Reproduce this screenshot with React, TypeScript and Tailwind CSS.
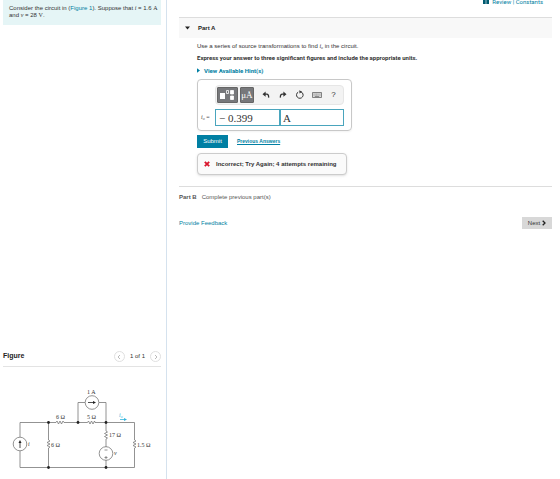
import type { ReactNode } from "react"

const teal = "text-[#007fa3]"

function ToolButton({ label, children }: { label: string; children: ReactNode }) {
  return (
    <button type="button" aria-label={label} className="flex h-4 w-[17px] items-center justify-center text-[#333]">
      {children}
    </button>
  )
}

function UndoArrow({ className = "" }: { className?: string }) {
  return (
    <svg viewBox="0 0 8 8" className={`size-2 ${className}`} fill="none">
      <path d="M0.5 3.2 3.6 0.6V5.8Z" fill="#333" />
      <path d="M3 3.2H4.6C6.2 3.2 6.8 4.4 6.6 6.6" stroke="#333" strokeWidth="1.3" />
    </svg>
  )
}

function Toolbar() {
  return (
    <div className="flex h-5 items-center rounded-sm border border-[#e6e6e6] bg-[#f3f3f3] px-px">
      <button
        type="button"
        aria-label="Templates"
        className="flex h-4 w-[22px] items-center justify-center rounded-[1px] border border-[#666] bg-[#77787b]"
      >
        <svg viewBox="0 0 18 12" className="h-3 w-[18px]" fill="none">
          <path d="M2 4H7V10H2Z" fill="#fff" />
          <path d="M8.5 1.5H10.5V4.5H8.5ZM12.5 1.5H15.5V5H12.5ZM12.5 7H15.5V10.5H12.5Z" stroke="#fff" strokeWidth="0.8" />
          <path d="M12.5 1.5H15.5V5H12.5ZM12.5 7H15.5V10.5H12.5Z" fill="#fff" />
        </svg>
      </button>
      <button
        type="button"
        aria-label="Units"
        className="ml-0.5 flex h-4 w-[15px] items-center justify-center rounded-[1px] border border-[#666] bg-[#77787b] font-['Liberation_Serif',serif] text-[9px] leading-none text-white"
      >
        μÅ
      </button>
      <div className="flex flex-1 items-center justify-between pl-[3px]">
        <ToolButton label="Undo">
          <UndoArrow />
        </ToolButton>
        <ToolButton label="Redo">
          <UndoArrow className="-scale-x-100" />
        </ToolButton>
        <ToolButton label="Reset">
          <svg viewBox="0 0 10 10" className="size-[10px]" fill="none">
            <path d="M3.2 2.1A3.3 3.3 0 1 0 6 1.9" stroke="#333" strokeWidth="1" />
            <path d="M4.2 0.3 7 1.8 4.6 3.6Z" fill="#333" />
          </svg>
        </ToolButton>
        <ToolButton label="Keyboard">
          <svg viewBox="0 0 10 6" className="h-1.5 w-[10px]" fill="none">
            <path d="M0.5 0.5H9.5V5.5H0.5Z" fill="#ddd" stroke="#666" strokeWidth="0.8" />
            <path d="M1.5 2H8.5M1.5 3.2H8.5" stroke="#777" strokeWidth="0.6" strokeDasharray="0.9 0.4" />
            <path d="M2.8 4.5H7.2" stroke="#666" strokeWidth="0.7" />
          </svg>
        </ToolButton>
        <ToolButton label="Help">
          <span className="text-[8px] leading-none">?</span>
        </ToolButton>
      </div>
    </div>
  )
}

function Circuit() {
  return (
    <svg viewBox="0 0 158 100" className="w-full" fill="none" stroke="#777" strokeWidth="0.8" role="img" aria-label="Circuit diagram">
      {/* outer loop */}
      <path d="M17 58V43.5H53M61 43.5H84.5M92 43.5H131.5V61M131.5 69V88.5H17V72" />
      <path d="M45.5 43.5V61M45.5 69V88.5" />
      <path d="M75 43.5V23.5H82M96 23.5H103V52M103 60V68M103 81V88.5" />

      {/* resistors */}
      <path d="M53 43.5 54 42 55.5 45 57 42 58.5 45 60 42 61 43.5" />
      <path d="M84.5 43.5 85.5 42 87 45 88.5 42 90 45 91.5 42 92 43.5" />
      <path d="M45.5 61 47 62 44 63.5 47 65 44 66.5 47 68 45.5 69" />
      <path d="M103 52 104.5 53 101.5 54.5 104.5 56 101.5 57.5 104.5 59 103 60" />
      <path d="M131.5 61 133 62 130 63.5 133 65 130 66.5 133 68 131.5 69" />

      {/* sources */}
      <circle cx="17" cy="65" r="6.8" />
      <path d="M17 69V63" stroke="#222" />
      <path d="M15.5 64 17 61 18.5 64Z" fill="#222" stroke="none" />
      <circle cx="89" cy="23.5" r="6.8" />
      <path d="M85 23.5H91" stroke="#222" />
      <path d="M90 22 93 23.5 90 25Z" fill="#222" stroke="none" />
      <circle cx="103" cy="74.5" r="6.8" />
      <path d="M101.5 71H104.5M101.5 78.5H104.5M103 77V80" />

      {/* nodes */}
      <g fill="#222" stroke="none">
        <circle cx="45.5" cy="43.5" r="1.4" />
        <circle cx="75" cy="43.5" r="1.4" />
        <circle cx="103" cy="43.5" r="1.4" />
        <circle cx="45.5" cy="88.5" r="1.4" />
        <circle cx="103" cy="88.5" r="1.4" />
      </g>

      <path d="M117 40.5H122" stroke="#35b5dc" />
      <path d="M121 39 124 40.5 121 42Z" fill="#35b5dc" stroke="none" />

      <g fill="#333" stroke="none" className="font-['Liberation_Serif',serif] text-[6px]">
        <text x="53" y="40">6 Ω</text>
        <text x="84" y="40">5 Ω</text>
        <text x="84" y="15">1 A</text>
        <text x="48" y="68">6 Ω</text>
        <text x="106" y="58">17 Ω</text>
        <text x="134" y="68">1.5 Ω</text>
        <text x="25" y="67" className="italic">i</text>
        <text x="111" y="76" className="italic">v</text>
        <text x="116" y="38" fill="#35b5dc" className="italic">i<tspan className="text-[4px]" dy="1">o</tspan></text>
      </g>
    </svg>
  )
}

function Sidebar() {
  return (
    <aside className="flex w-[167px] shrink-0 flex-col border-r border-[#d5e2ee] pr-[5px] pl-[3px]">
      <div className="h-[25px] bg-[#e5f5f6] pt-[5px] pl-1.5 text-[6px] leading-[7px] text-[#333]">
        Consider the circuit in (
        <a href="#figure" className={teal}>Figure 1</a>
        ). Suppose that <i className="font-['Liberation_Serif',serif]">i</i> = 1.6{" "}
        <span className="font-['Liberation_Serif',serif]">A</span>
        <br />
        and <i className="font-['Liberation_Serif',serif]">v</i> = 28{" "}
        <span className="font-['Liberation_Serif',serif]">V</span>.
      </div>

      <section id="figure" className="mt-auto">
        <header className="flex h-[17px] items-center justify-between border-b border-[#e3e3e3] pb-[3px]">
          <h2 className="text-[7px] font-bold text-[#222]">Figure</h2>
          <div className="flex items-center gap-[5px] text-[6px] text-[#333]">
            <button type="button" aria-label="Previous figure" className="flex size-[11px] items-center justify-center rounded-full border border-[#e0e0e0]">
              <svg viewBox="0 0 4 6" className="h-1.5 w-1" fill="none"><path d="M3 1 1 3 3 5" stroke="#aaa" strokeWidth="0.8" /></svg>
            </button>
            <span>1 of 1</span>
            <button type="button" aria-label="Next figure" className="flex size-[11px] items-center justify-center rounded-full border border-[#e0e0e0]">
              <svg viewBox="0 0 4 6" className="h-1.5 w-1" fill="none"><path d="M1 1 3 3 1 5" stroke="#aaa" strokeWidth="0.8" /></svg>
            </button>
          </div>
        </header>
        <div className="pt-3">
          <Circuit />
        </div>
      </section>
    </aside>
  )
}

function AnswerBox() {
  return (
    <div className="mt-[3px] w-[155px] rounded-sm border border-[#c8c8c8] pt-[5px] pr-[7px] pb-1 pl-[3px] shadow-xs">
      <div className="pl-3.5">
        <Toolbar />
      </div>
      <div className="mt-1 flex items-center">
        <label htmlFor="answer-value" className="w-3.5 font-['Liberation_Serif',serif] text-[6px] whitespace-nowrap text-[#444]">
          <i>i<sub className="text-[4px]">o</sub></i> =
        </label>
        <input
          id="answer-value"
          defaultValue="− 0.399"
          className="h-[17px] w-[65px] border border-[#4aa5bd] bg-white px-[3px] font-['Liberation_Serif',serif] text-[11px] text-[#333]"
        />
        <input
          aria-label="Units"
          defaultValue="A"
          className="h-[17px] min-w-0 flex-1 border border-[#4aa5bd] bg-white px-0.5 font-['Liberation_Serif',serif] text-[11px] text-[#333]"
        />
      </div>
    </div>
  )
}

function PartA() {
  return (
    <section>
      <h2 className="flex h-[21px] items-center gap-2 border-t border-[#ddd] bg-[#f8f8f8] pl-1.5 text-[6px] font-bold text-[#222]">
        <svg viewBox="0 0 5 4" className="h-1 w-[5px]"><path d="M0 0.5H5L2.5 3.5Z" fill="#222" /></svg>
        Part A
      </h2>
      <div className="flex flex-col items-start pt-[3px] pl-[18px] text-[6px] leading-[11px] text-[#333]">
        <p className="h-[11px]">
          Use a series of source transformations to find{" "}
          <i className="font-['Liberation_Serif',serif]">i<sub className="text-[4px]">o</sub></i> in the circuit.
        </p>
        <p className="font-[Roboto,sans-serif] font-bold">
          Express your answer to three significant figures and include the appropriate units.
        </p>
        <button type="button" className={`mt-0.5 flex items-center gap-1 font-[Roboto,sans-serif] font-bold ${teal}`}>
          <svg viewBox="0 0 3 5" className="h-[5px] w-[3px]"><path d="M0 0.3 3 2.5 0 4.7Z" fill="#007fa3" /></svg>
          View Available Hint(s)
        </button>
        <AnswerBox />
        <div className="mt-1 flex items-center gap-[9px]">
          <button type="button" className="h-[13px] w-[31px] bg-[#007fa3] text-white">Submit</button>
          <a href="#previous" className={`text-[5px] font-bold underline ${teal}`}>Previous Answers</a>
        </div>
        <div className="mt-[5px] flex h-[22px] items-center gap-1.5 rounded-sm border border-[#ccc] bg-[#fafafa] pr-2.5 pl-1.5 font-bold shadow-sm" role="status">
          <svg viewBox="0 0 6 6" className="size-1.5"><path d="M0.8 0.8 5.2 5.2M5.2 0.8 0.8 5.2" stroke="#d9142b" strokeWidth="1.8" /></svg>
          Incorrect; Try Again; 4 attempts remaining
        </div>
      </div>
    </section>
  )
}

export default function App() {
  return (
    <div className="flex min-h-screen bg-white font-['Liberation_Sans',sans-serif]">
      <Sidebar />
      <main className="min-w-0 flex-1 pr-2 pl-3">
        <div className="flex h-[17px] items-start justify-end pr-[9px]">
          <div className={`-mt-0.5 flex items-center gap-[3px] font-[Roboto,sans-serif] text-[6px] leading-[7px] ${teal}`}>
            <svg viewBox="0 0 6 5" className="h-[5px] w-1.5"><path d="M0 0H2.7V5H0ZM3.3 0H6V5H3.3Z" fill="#005a70" /></svg>
            <span>
              <a href="#review">Review</a> | <a href="#constants">Constants</a>
            </span>
          </div>
        </div>
        <PartA />
        <section className="mt-[11px] flex h-[21px] items-center gap-[5px] border-t border-[#ddd] text-[6px] text-[#555]">
          <h2 className="font-bold">Part B</h2>
          <p>Complete previous part(s)</p>
        </section>
        <footer className="mt-2.5 flex items-center justify-between text-[6px]">
          <a href="#feedback" className={teal}>Provide Feedback</a>
          <button type="button" className="flex h-3 w-[30px] items-center justify-center gap-0.5 bg-[#d8d8d8] text-[#333]">
            Next
            <svg viewBox="0 0 4 6" className="h-1.5 w-1" fill="none"><path d="M0.7 0.7 3 3 0.7 5.3" stroke="#222" strokeWidth="1.3" /></svg>
          </button>
        </footer>
      </main>
    </div>
  )
}
